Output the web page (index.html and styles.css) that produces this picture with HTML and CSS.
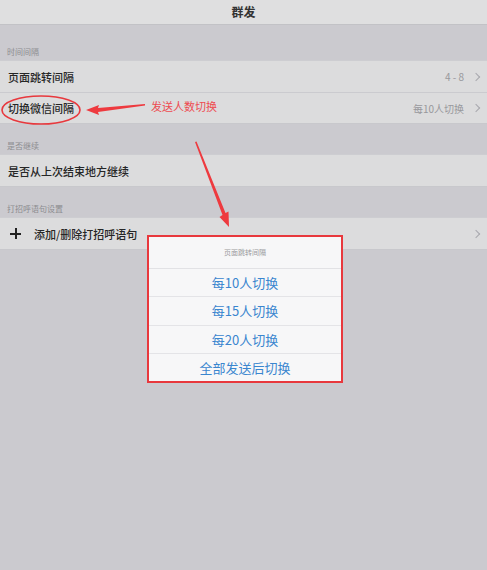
FILE: index.html
```html
<!DOCTYPE html>
<html lang="zh-CN">
<head>
  <meta charset="UTF-8" />
  <title>群发</title>
  <link rel="stylesheet" href="styles.css">
</head>
<body>
  <div class="screen">
    <header class="navbar">群发</header>

    <div class="section-title first">时间间隔</div>
    <div class="group">
      <div class="cell">
        <span class="cell-label">页面跳转间隔</span>
        <span class="cell-value">4 - 8<i class="chev"></i></span>
      </div>
      <div class="cell">
        <span class="cell-label">切换微信间隔</span>
        <span class="cell-value">每10人切换<i class="chev"></i></span>
      </div>
    </div>

    <div class="section-title">是否继续</div>
    <div class="group">
      <div class="cell">
        <span class="cell-label">是否从上次结束地方继续</span>
      </div>
    </div>

    <div class="section-title">打招呼语句设置</div>
    <div class="group">
      <div class="cell">
        <span class="cell-label"><span class="plus"></span>添加/删除打招呼语句</span>
        <span class="cell-value"><i class="chev"></i></span>
      </div>
    </div>

    <!-- action sheet popover -->
    <div class="popover">
      <div class="popover-title">页面跳转间隔</div>
      <div class="option">每10人切换</div>
      <div class="option">每15人切换</div>
      <div class="option">每20人切换</div>
      <div class="option">全部发送后切换</div>
    </div>

    <!-- red annotations -->
    <span class="note">发送人数切换</span>
    <svg class="marks" width="487" height="570" viewBox="0 0 487 570">
      <ellipse cx="41" cy="110" rx="39" ry="14" fill="none" stroke="#e8383d" stroke-width="1.6"/>
      <polygon points="145,104 98,108 99,105 86,110 99,115 98,112 145,105.5" fill="#ee3a3f"/>
      <polygon points="195,142 196.5,141.5 225.5,213 228.5,211.5 229,227 219.5,217 222.5,215" fill="#ee3a3f"/>
    </svg>
  </div>
</body>
</html>
```

FILE: styles.css
```css
* {
  box-sizing: border-box;
  margin: 0;
  padding: 0;
}

body {
  font-family: "Noto Sans CJK SC", "Noto Sans", sans-serif;
  background: #cbcacf;
  color: #222;
}

.screen {
  position: relative;
  width: 487px;
  height: 570px;
  overflow: hidden;
  background: #cbcacf;
}

.navbar {
  height: 25px;
  line-height: 24px;
  text-align: center;
  font-size: 12px;
  font-weight: 700;
  color: #333;
  background: #dfdfe0;
  border-bottom: 1px solid #c2c2c6;
}

.section-title {
  padding: 16px 0 3px 7px;
  font-size: 8px;
  line-height: 11px;
  color: #8c8c90;
}

.section-title.first {
  padding-top: 21px;
}

.group {
  background: #dcdcdd;
  border-top: 1px solid #cdcdd1;
  border-bottom: 1px solid #c8c8cc;
}

.cell {
  display: flex;
  align-items: center;
  justify-content: space-between;
  height: 31px;
  padding: 0 6px 0 8px;
  font-size: 11px;
}

.cell + .cell {
  border-top: 1px solid #cbcbcf;
}

.cell-label {
  display: flex;
  align-items: center;
  font-weight: 500;
  color: #262626;
}

.plus {
  position: relative;
  width: 11px;
  height: 11px;
  margin: 0 13px 0 2px;
}

.plus::before,
.plus::after {
  content: "";
  position: absolute;
  background: #222;
}

.plus::before {
  left: 0;
  top: 5px;
  width: 11px;
  height: 1.5px;
}

.plus::after {
  left: 5px;
  top: 0;
  width: 1.5px;
  height: 11px;
}

.cell-value {
  display: flex;
  align-items: center;
  color: #98989c;
  font-size: 10px;
}

.chev {
  display: inline-block;
  width: 6px;
  height: 6px;
  margin: 0 2px 0 9px;
  border-top: 1px solid #a8a8ad;
  border-right: 1px solid #a8a8ad;
  transform: rotate(45deg);
}

.popover {
  position: absolute;
  left: 147px;
  top: 235px;
  width: 196px;
  height: 148px;
  background: #f7f7f8;
  border: 2px solid #e8383d;
  display: flex;
  flex-direction: column;
}

.popover-title {
  height: 32px;
  line-height: 30px;
  text-align: center;
  font-size: 7px;
  color: #9c9ca0;
  border-bottom: 1px solid #e2e2e5;
}

.option {
  flex: 1;
  display: flex;
  align-items: center;
  justify-content: center;
  font-size: 13px;
  color: #3a86cf;
}

.option + .option {
  border-top: 1px solid #e4e4e7;
}

.note {
  position: absolute;
  left: 151px;
  top: 98px;
  font-size: 11px;
  color: #ee4b50;
}

.marks {
  position: absolute;
  left: 0;
  top: 0;
  pointer-events: none;
}
```
